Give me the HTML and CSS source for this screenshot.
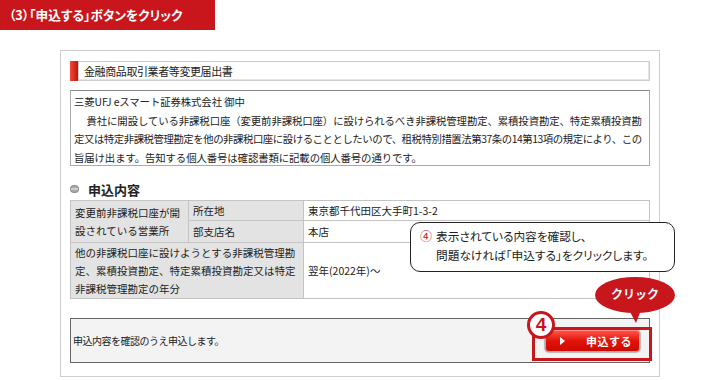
FILE: index.html
```html
<!DOCTYPE html>
<html>
<head>
    <title>申込する</title>
    <link rel="stylesheet" href="styles.css">
</head>
<body>
    <div class="step-title">（3）「申込する」ボタンをクリック</div>

    <div class="panel">
        <div class="doc-title">
            <span class="doc-mark"></span>
            <div class="doc-name">金融商品取引業者等変更届出書</div>
        </div>

        <div class="intro">
            <p>三菱UFJ eスマート証券株式会社 御中</p>
            <p class="indent">貴社に開設している非課税口座（変更前非課税口座）に設けられるべき非課税管理勘定、累積投資勘定、特定累積投資勘<br><span class="tight">定又は特定非課税管理勘定を他の非課税口座に設けることとしたいので、租税特別措置法第37条の14第13項の規定により、この</span><br>旨届け出ます。告知する個人番号は確認書類に記載の個人番号の通りです。</p>
        </div>

        <h2 class="section-head">
            <svg class="section-icon" width="9" height="8" viewBox="0 0 9 8">
                <rect x="0.5" y="0.5" width="8" height="7" rx="3" fill="#a8a8a8" stroke="#888"/>
                <rect x="1" y="3.5" width="7" height="1" fill="#f4f4f4"/>
            </svg>
            申込内容
        </h2>

        <table class="apply-table">
            <tr class="row-a">
                <th rowspan="2">変更前非課税口座が開<br>設されている営業所</th>
                <th class="sub">所在地</th>
                <td>東京都千代田区大手町1-3-2</td>
            </tr>
            <tr class="row-b">
                <th class="sub">部支店名</th>
                <td>本店</td>
            </tr>
            <tr class="row-c">
                <th colspan="2">他の非課税口座に設けようとする非課税管理勘<br>定、累積投資勘定、特定累積投資勘定又は特定<br>非課税管理勘定の年分</th>
                <td>翌年(2022年)～</td>
            </tr>
        </table>

        <div class="submit-bar">
            <span>申込内容を確認のうえ申込します。</span>
            <button type="button" class="submit-btn"><span class="arrow"></span>申込する</button>
        </div>
    </div>

    <!-- annotations drawn over the screen -->
    <div class="callout"><span class="num">④</span><span>表示されている内容を確認し、<br>問題なければ「申込する」をクリックします。</span></div>
    <div class="highlight"></div>
    <div class="step-num">4</div>
    <svg class="click-bubble" width="84" height="48" viewBox="0 0 84 48">
        <ellipse cx="40" cy="18" rx="40" ry="18" fill="#c8161d"/>
        <path d="M34 33 L46 33 L41 46 Z" fill="#c8161d"/>
        <text x="40" y="22" text-anchor="middle">クリック</text>
    </svg>
</body>
</html>
```

FILE: styles.css
```css
body {
    margin: 0;
    width: 720px;
    height: 380px;
    overflow: hidden;
    position: relative;
    background-color: white;
    font-family: "Noto Sans CJK JP", "Noto Sans", sans-serif;
    color: #333;
}

p {
    margin: 0;
}

.step-title {
    width: 215px;
    height: 30px;
    box-sizing: border-box;
    padding-left: 9px;
    background-color: #c9161d;
    color: white;
    font-size: 12.7px;
    font-weight: bold;
    line-height: 30px;
    font-feature-settings: "palt";
}

.panel {
    margin: 20px 0 0 60px;
    width: 580px;
    padding: 10px 9px 13px 9px;
    border: 1px solid #cfcfcf;
}

.doc-title {
    display: flex;
    height: 20px;
}

.doc-mark {
    width: 8px;
    background: linear-gradient(to right, #f04a36, #c4130c);
}

.doc-name {
    flex: 1;
    border: 1px solid #cdcdcd;
    box-shadow: inset -1px -1px 0 #e4e4e4;
    padding-left: 5px;
    font-size: 11px;
    line-height: 18px;
    letter-spacing: -0.4px;
    color: #222;
}

.intro {
    margin-top: 9px;
    height: 71px;
    padding: 2px 3px 1px 3px;
    border: 1px solid #aaa;
    border-top-color: #888;
    font-size: 10.4px;
    line-height: 18.5px;
    letter-spacing: -0.1px;
    white-space: nowrap;
    color: #222;
}

.intro .indent {
    text-indent: 1.2em;
}

.intro .tight {
    letter-spacing: -0.45px;
}

.section-head {
    display: flex;
    align-items: center;
    gap: 9px;
    margin: 14px 0 2px 0;
    height: 18px;
    font-size: 13px;
    font-weight: bold;
    color: #222;
}

.apply-table {
    width: 580px;
    border-collapse: collapse;
    font-size: 10.5px;
    color: #222;
}

.apply-table th,
.apply-table td {
    border: 1px solid #c4c4c4;
    padding: 0 4px;
    text-align: left;
    font-weight: normal;
    line-height: 18px;
    white-space: nowrap;
}

.apply-table th {
    background-color: #e3e3e3;
    width: 109px;
}

.apply-table th.sub {
    width: 106px;
}

.row-a {
    height: 20px;
}

.row-b {
    height: 22px;
}

.row-c {
    height: 56px;
}

.submit-bar {
    display: flex;
    align-items: center;
    justify-content: space-between;
    margin-top: 19px;
    height: 43px;
    padding: 0 8px 0 2px;
    border: 1px solid #666;
    background-color: #f3f3f3;
    font-size: 10px;
    letter-spacing: -0.5px;
    color: #222;
}

.submit-btn {
    display: flex;
    align-items: center;
    width: 97px;
    height: 24px;
    padding: 0 0 0 15px;
    border: 1px solid #bbb;
    border-radius: 5px;
    background: linear-gradient(#ff5a4a, #e21208 50%, #c90a00);
    box-shadow: 0 0 0 1px #eee, inset 0 0 0 1px #f88;
    color: white;
    font-family: inherit;
    font-size: 11px;
    font-weight: bold;
    letter-spacing: 0.5px;
}

.arrow {
    width: 0;
    height: 0;
    margin-right: 21px;
    border-left: 5px solid white;
    border-top: 4px solid transparent;
    border-bottom: 4px solid transparent;
}

.callout {
    position: absolute;
    left: 410px;
    top: 222px;
    width: 265px;
    height: 50px;
    padding: 3px 0 0 9px;
    box-sizing: border-box;
    display: flex;
    gap: 4px;
    border: 1.5px solid #222;
    border-radius: 10px;
    background-color: white;
    font-size: 11.7px;
    line-height: 19px;
    font-feature-settings: "palt";
    color: #222;
}

.callout .num {
    color: #c8161d;
    font-size: 12px;
}

.highlight {
    position: absolute;
    left: 532px;
    top: 327px;
    width: 114px;
    height: 28px;
    border: 3px solid #c8161d;
}

.step-num {
    position: absolute;
    left: 527px;
    top: 311px;
    width: 22px;
    height: 22px;
    border: 3px solid #c8161d;
    border-radius: 50%;
    background-color: white;
    color: #c8161d;
    font-family: "Liberation Sans", sans-serif;
    font-size: 19px;
    font-weight: bold;
    line-height: 22px;
    text-align: center;
}

.click-bubble {
    position: absolute;
    left: 595px;
    top: 277px;
}

.click-bubble text {
    fill: white;
    font-family: "Noto Sans CJK JP", sans-serif;
    font-size: 12px;
    font-weight: bold;
}
```
